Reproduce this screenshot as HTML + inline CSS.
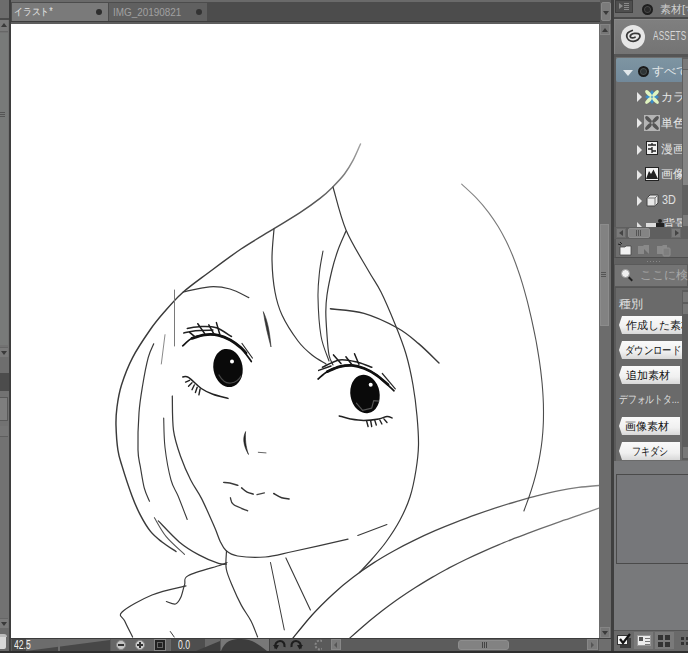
<!DOCTYPE html>
<html><head><meta charset="utf-8">
<style>
*{margin:0;padding:0;box-sizing:border-box}
html,body{width:688px;height:653px;overflow:hidden;background:#6f6f6f;font-family:"Liberation Sans",sans-serif;}
.a{position:absolute}
</style></head><body>
<!-- left panel -->
<div class="a" style="left:0;top:0;width:9px;height:653px;background:#727272"></div>
<div class="a" style="left:9px;top:0;width:2px;height:653px;background:#3e3e3e"></div>
<div class="a" style="left:0;top:0;width:9px;height:18px;background:#6c6c6c"></div>
<div class="a" style="left:0;top:18px;width:9px;height:2px;background:#4a4a4a"></div>
<div class="a" style="left:0;top:20px;width:8px;height:12px;background:#7a7a7a;border-bottom:1px solid #666"></div>
<div class="a" style="left:1px;top:23px;width:0;height:0;border-bottom:4px solid #3a3a3a;border-left:3px solid transparent;border-right:3px solid transparent"></div>
<div class="a" style="left:0;top:33px;width:8px;height:312px;background:#787a79"></div>
<div class="a" style="left:0;top:112px;width:5px;height:1px;background:#555;box-shadow:0 2px 0 #555,0 4px 0 #555"></div>
<div class="a" style="left:0;top:347px;width:8px;height:10px;background:#7a7a7a;border-top:1px solid #666"></div>
<div class="a" style="left:1px;top:351px;width:0;height:0;border-top:4px solid #3a3a3a;border-left:3px solid transparent;border-right:3px solid transparent"></div>
<div class="a" style="left:0;top:357px;width:9px;height:16px;background:#6e6e6e"></div>
<div class="a" style="left:0;top:373px;width:9px;height:18px;background:#4c4c4c"></div>
<div class="a" style="left:0;top:397px;width:8px;height:24px;background:#7e7e7e;border:1px solid #595959;border-left:none"></div>
<div class="a" style="left:0;top:426px;width:8px;height:11px;background:#767676;border-bottom:1px solid #5e5e5e"></div>
<div class="a" style="left:0;top:618px;width:8px;height:10px;background:#7a7a7a;border-top:1px solid #666"></div>
<div class="a" style="left:1px;top:622px;width:0;height:0;border-top:4px solid #3a3a3a;border-left:3px solid transparent;border-right:3px solid transparent"></div>
<div class="a" style="left:0;top:628px;width:9px;height:23px;background:#6a6a6a"></div>
<div class="a" style="left:0;top:636px;width:6px;height:13px;background:#d8d8d8;border-radius:0 0 2px 0"></div>
<div class="a" style="left:0;top:634px;width:7px;height:3px;background:#bbb;border-radius:0 3px 0 0"></div>
<!-- tab bar -->
<div class="a" style="left:11px;top:0;width:589px;height:3px;background:#6a6a6a"></div>
<div class="a" style="left:11px;top:2px;width:589px;height:22px;background:#4c4c4c"></div>
<div class="a" style="left:11px;top:21px;width:589px;height:1px;background:#3c3c3c"></div>
<div class="a" style="left:11px;top:22px;width:589px;height:2px;background:#5e5e5e"></div>
<div class="a" style="left:12px;top:3px;width:96px;height:18px;background:#7a7a7a"></div>
<div class="a" style="left:109px;top:3px;width:98px;height:18px;background:#606060"></div>
<div class="a" style="left:14px;top:5px;font-size:10px;line-height:14px;color:#e4e4e4;white-space:nowrap;transform:scaleX(0.88);transform-origin:0 0">イラスト*</div>
<div class="a" style="left:96px;top:9px;width:6px;height:6px;border-radius:50%;background:#2e2e2e"></div>
<div class="a" style="left:113px;top:5px;font-size:11px;line-height:14px;color:#a0a0a0;white-space:nowrap;transform:scaleX(0.9);transform-origin:0 0">IMG_20190821</div>
<div class="a" style="left:196px;top:9px;width:6px;height:6px;border-radius:50%;background:#333"></div>
<!-- canvas -->
<div class="a" style="left:11px;top:24px;width:588px;height:615px;background:#fff"></div>
<svg class="a" style="left:0;top:0" width="688" height="653" viewBox="0 0 688 653">
<defs><linearGradient id="gc" gradientUnits="userSpaceOnUse" x1="300" y1="0" x2="600" y2="0"><stop offset="0" stop-color="#333"/><stop offset="0.6" stop-color="#4a4a4a"/><stop offset="1" stop-color="#888"/></linearGradient>
<linearGradient id="gr" gradientUnits="userSpaceOnUse" x1="0" y1="185" x2="0" y2="510"><stop offset="0" stop-color="#888"/><stop offset="0.4" stop-color="#555"/><stop offset="1" stop-color="#444"/></linearGradient>
<linearGradient id="gt" gradientUnits="userSpaceOnUse" x1="0" y1="140" x2="0" y2="560"><stop offset="0" stop-color="#aaa"/><stop offset="0.15" stop-color="#555"/><stop offset="0.3" stop-color="#3a3a3a"/><stop offset="1" stop-color="#3a3a3a"/></linearGradient>
<clipPath id="cv"><rect x="11" y="24" width="588" height="615"/></clipPath></defs>
<g clip-path="url(#cv)" fill="none" stroke-linecap="round" stroke-linejoin="round">
<path d="M360.5 144.0C359.2 146.7 355.7 155.4 353.0 160.4C350.3 165.4 347.9 169.5 344.5 174.0C341.1 178.5 336.4 183.3 332.3 187.4C328.2 191.5 325.4 194.2 320.0 198.4C314.6 202.6 307.7 207.6 300.0 212.6C292.3 217.6 283.8 222.6 274.0 228.7C264.2 234.8 252.1 241.5 241.0 249.0C229.9 256.5 217.2 266.2 207.4 273.5C197.6 280.8 189.5 286.5 182.2 293.0C174.9 299.5 169.2 306.4 163.8 312.6C158.4 318.8 155.2 322.5 150.0 330.0C144.8 337.5 137.3 348.4 132.6 357.6C127.8 366.8 124.1 376.8 121.5 385.0C118.9 393.2 117.9 400.2 117.0 407.0C116.1 413.8 115.8 418.4 116.0 425.6C116.2 432.8 116.9 443.3 117.9 450.0C118.9 456.7 119.7 458.3 122.0 465.9C124.3 473.5 128.9 487.6 131.9 495.7C134.9 503.8 136.9 508.4 140.0 514.4C143.1 520.4 146.8 526.8 150.5 531.4C154.2 536.0 157.8 538.6 162.0 542.0C166.2 545.4 173.7 549.9 176.0 551.5" stroke="url(#gt)" stroke-width="1.45"/>
<path d="M274.0 229.0C273.7 234.2 271.8 249.5 272.0 260.0C272.2 270.5 273.3 282.8 275.0 292.0C276.7 301.2 278.2 306.8 282.0 315.0C285.8 323.2 293.0 334.3 298.0 341.0C303.0 347.7 307.3 351.2 312.0 355.0C316.7 358.8 323.7 362.5 326.0 364.0" stroke="#3a3a3a" stroke-width="1.2"/>
<path d="M333.0 187.0C335.2 194.2 340.2 216.2 346.0 230.0C351.8 243.8 362.2 259.7 368.0 270.0C373.8 280.3 376.5 283.0 381.0 292.0C385.5 301.0 390.8 313.7 395.0 324.0C399.2 334.3 403.0 343.8 406.0 354.0C409.0 364.2 411.2 374.7 413.0 385.0C414.8 395.3 416.1 406.0 417.0 416.0C417.9 426.0 418.7 436.0 418.5 445.0C418.3 454.0 417.4 461.3 416.0 470.0C414.6 478.7 412.7 488.7 410.0 497.0C407.3 505.3 404.0 512.5 400.0 520.0C396.0 527.5 390.7 535.5 386.0 542.0C381.3 548.5 376.4 553.9 372.0 559.0C367.6 564.1 361.6 570.2 359.5 572.5" stroke="#3a3a3a" stroke-width="1.2"/>
<path d="M346.0 231.0C344.7 234.2 340.3 243.5 338.0 250.0C335.7 256.5 333.8 262.5 332.0 270.0C330.2 277.5 328.0 288.0 327.0 295.0C326.0 302.0 325.8 305.3 325.8 312.0C325.8 318.7 326.5 327.8 327.0 335.0C327.5 342.2 328.0 350.0 329.0 355.0C330.0 360.0 332.3 363.3 333.0 365.0" stroke="#3a3a3a" stroke-width="1.2"/>
<path d="M323.0 251.0C322.4 254.5 320.3 264.3 319.5 272.0C318.7 279.7 317.8 286.3 318.0 297.0C318.2 307.7 319.2 325.3 321.0 336.0C322.8 346.7 327.7 356.8 329.0 361.0" stroke="#3a3a3a" stroke-width="1.1"/>
<path d="M330.4 308.8C336.0 309.6 352.8 310.2 364.0 313.4C375.2 316.6 388.4 323.0 397.5 328.0C406.6 333.0 411.7 337.8 418.6 343.6C425.5 349.4 435.6 359.7 439.0 362.9" stroke="#3a3a3a" stroke-width="1.4"/>
<path d="M183.3 291.9C187.7 291.0 201.9 287.3 209.7 286.8C217.5 286.3 223.5 287.2 230.0 289.0C236.5 290.8 245.7 296.2 248.8 297.6" stroke="#3a3a3a" stroke-width="1.2"/>
<path d="M174.5 290.0L174.5 346.0" stroke="#7a7a7a" stroke-width="1.0"/>
<path d="M172.3 396.0C172.5 401.7 172.1 420.1 173.5 430.3C174.9 440.5 178.0 449.0 180.9 457.3C183.8 465.6 187.2 473.1 190.7 480.0C194.1 486.9 197.6 490.7 201.6 498.6C205.6 506.5 211.5 520.2 214.6 527.3C217.7 534.4 218.1 537.1 220.0 541.0C221.9 544.9 223.1 548.0 226.0 550.5C228.9 553.0 231.1 554.9 237.6 556.0C244.1 557.1 256.0 557.8 265.2 557.0C274.4 556.2 279.1 554.5 292.9 551.5C306.7 548.5 338.8 541.2 348.0 539.2" stroke="#3a3a3a" stroke-width="1.25"/>
<path d="M153.7 343.8C152.8 346.1 150.0 350.7 148.2 357.6C146.4 364.5 144.2 375.8 142.7 385.0C141.2 394.2 139.8 401.9 139.0 412.7C138.2 423.5 137.8 440.9 138.0 450.0C138.2 459.1 139.3 460.6 140.4 467.0C141.5 473.4 142.8 482.5 144.3 488.2C145.8 493.9 148.6 499.1 149.5 501.2" stroke="#3a3a3a" stroke-width="1.2"/>
<path d="M165.0 334.7L161.3 364.0" stroke="#8a8a8a" stroke-width="1.0"/>
<path d="M163.7 418.0C163.9 422.9 163.8 437.2 165.0 447.5C166.2 457.8 168.8 471.9 171.0 480.0C173.2 488.1 175.4 489.4 178.1 496.0C180.8 502.6 185.7 515.6 187.2 519.5" stroke="#3a3a3a" stroke-width="1.1"/>
<path d="M154.4 517.7C156.4 520.9 161.2 530.5 166.2 536.6C171.2 542.7 181.4 551.3 184.5 554.3" stroke="#555" stroke-width="1.1"/>
<path d="M158.3 520.9C161.8 524.4 172.4 536.2 179.2 541.9C186.0 547.6 192.3 551.3 198.9 554.9C205.5 558.5 213.9 561.9 218.5 563.4C223.1 564.9 225.0 564.0 226.3 564.1" stroke="#3a3a3a" stroke-width="1.3"/>
<path d="M258.3 452.3L266.0 452.9" stroke="#666" stroke-width="1.0"/>
<path d="M223.6 482.4C224.6 482.5 227.4 482.5 229.8 483.0C232.2 483.5 236.6 485.0 237.9 485.4" stroke="#3a3a3a" stroke-width="1.4"/>
<path d="M241.6 487.9C242.5 488.6 245.1 491.2 247.1 492.2C249.1 493.2 252.3 493.8 253.3 494.1" stroke="#333" stroke-width="1.5"/>
<path d="M257.0 494.7L264.4 492.9" stroke="#444" stroke-width="1.3"/>
<path d="M273.7 493.5C275.0 494.2 279.1 496.9 281.7 497.8C284.3 498.7 287.9 498.8 289.1 499.0" stroke="#333" stroke-width="1.5"/>
<path d="M230.4 497.8C230.9 498.9 230.6 502.4 233.5 504.6C236.4 506.8 245.3 509.8 247.7 510.8" stroke="#3a3a3a" stroke-width="1.3"/>
<path d="M357.8 535.5L386.9 524.5" stroke="#3a3a3a" stroke-width="1.1"/>
<path d="M226.5 551.0C226.5 554.0 225.2 563.0 226.3 569.0C227.4 575.0 230.3 580.9 232.8 587.0C235.3 593.1 238.4 599.7 241.4 605.4C244.4 611.1 248.3 615.7 251.0 621.0C253.7 626.3 256.5 634.3 257.6 637.0" stroke="#3a3a3a" stroke-width="1.2"/>
<path d="M227.0 562.5C226.0 562.9 227.4 562.8 221.0 565.0C214.6 567.2 194.6 572.2 188.5 575.5C182.4 578.8 185.9 580.9 184.6 584.6C183.3 588.3 182.2 594.4 180.7 597.6C179.2 600.8 177.9 603.4 175.5 604.0C173.1 604.6 167.9 601.9 166.4 601.5" stroke="#3a3a3a" stroke-width="1.2"/>
<path d="M186.0 585.9C180.3 587.4 162.7 590.6 152.0 595.0C141.3 599.4 126.6 607.7 122.1 612.0C117.5 616.3 123.0 616.8 124.7 621.0C126.5 625.2 131.3 634.3 132.6 637.0" stroke="#3a3a3a" stroke-width="1.2"/>
<path d="M170.3 631.5L174.2 637.0" stroke="#3a3a3a" stroke-width="1.0"/>
<path d="M270.5 562.5L284.3 629.9" stroke="#3a3a3a" stroke-width="1.0"/>
<path d="M285.9 557.9L310.4 610.0" stroke="#3a3a3a" stroke-width="1.1"/>
<path d="M291.6 639.8C295.0 635.7 305.3 622.5 312.1 615.0C318.9 607.4 325.8 600.7 332.6 594.4C339.4 588.1 346.2 582.5 353.1 577.3C359.9 572.0 366.7 567.3 373.6 562.9C380.4 558.4 387.2 554.5 394.1 550.7C400.9 546.9 407.7 543.4 414.6 540.1C421.4 536.8 428.2 533.7 435.1 530.7C441.9 527.8 448.7 525.0 455.5 522.4C462.4 519.7 469.2 517.1 476.0 514.7C482.9 512.2 489.7 509.9 496.5 507.7C503.4 505.4 510.2 503.3 517.0 501.3C523.9 499.3 530.7 497.3 537.5 495.6C544.4 493.9 551.2 492.2 558.0 490.9C564.8 489.5 571.7 488.3 578.5 487.4C585.3 486.5 595.6 485.8 599.0 485.5" stroke="url(#gc)" stroke-width="1.3"/>
<path d="M349.2 638.6C352.0 636.1 360.3 628.6 365.9 623.9C371.4 619.2 377.0 614.8 382.5 610.5C388.1 606.3 393.6 602.2 399.2 598.3C404.7 594.5 410.3 590.8 415.8 587.3C421.4 583.7 426.9 580.4 432.5 577.1C438.0 573.9 443.6 570.9 449.1 567.9C454.7 565.0 460.2 562.2 465.8 559.5C471.3 556.8 476.9 554.2 482.4 551.8C488.0 549.3 493.5 546.9 499.1 544.6C504.6 542.3 510.2 540.1 515.7 537.9C521.3 535.7 526.8 533.7 532.4 531.6C537.9 529.5 543.5 527.5 549.0 525.6C554.6 523.6 560.1 521.6 565.7 519.7C571.2 517.8 576.8 515.9 582.3 513.9C587.9 512.0 596.2 509.1 599.0 508.1" stroke="url(#gc)" stroke-width="1.3"/>
<path d="M461.7 184.2C464.2 186.6 472.2 193.7 476.7 198.4C481.2 203.1 485.1 207.9 488.7 212.6C492.3 217.4 495.4 222.1 498.3 226.8C501.2 231.6 503.7 236.3 506.1 241.0C508.5 245.8 510.5 250.5 512.5 255.2C514.4 260.0 516.2 264.7 517.8 269.5C519.5 274.2 521.0 278.9 522.4 283.7C523.8 288.4 525.1 293.1 526.4 297.9C527.7 302.6 528.8 307.3 529.9 312.1C531.1 316.8 532.1 321.6 533.1 326.3C534.1 331.0 535.1 335.8 536.0 340.5C536.8 345.2 537.7 350.0 538.4 354.7C539.2 359.4 539.9 364.2 540.5 368.9C541.1 373.6 541.6 378.4 542.1 383.1C542.5 387.9 542.9 392.6 543.1 397.3C543.4 402.1 543.5 406.8 543.5 411.5C543.5 416.3 543.5 421.0 543.2 425.7C543.0 430.5 542.6 435.2 542.1 440.0C541.6 444.7 540.9 449.4 540.1 454.2C539.3 458.9 538.4 463.6 537.3 468.4C536.2 473.1 535.0 477.8 533.6 482.6C532.2 487.3 530.7 492.1 529.1 496.8C527.4 501.5 524.7 508.6 523.9 511.0" stroke="url(#gr)" stroke-width="1.1"/>
<path d="M182.7 345.8C184.2 344.6 188.3 340.1 192.0 338.3C195.7 336.5 200.2 335.3 204.7 334.8C209.1 334.3 214.4 334.4 218.7 335.3C223.0 336.2 226.6 337.9 230.3 340.0C234.0 342.1 237.3 344.0 240.8 347.6C244.3 351.2 249.6 359.2 251.3 361.5" stroke="#111" stroke-width="1.7"/>
<path d="M192.0 338.3C194.1 337.7 200.2 335.3 204.7 334.8C209.1 334.3 214.4 334.4 218.7 335.3C223.0 336.2 226.6 337.9 230.3 340.0C234.0 342.1 238.2 345.4 240.8 347.6C243.4 349.8 245.1 352.1 246.0 353.0" stroke="#111" stroke-width="2.8"/>
<path d="M242.0 343.5L252.4 358.0" stroke="#2a2a2a" stroke-width="1.2"/>
<path d="M187.3 328.4C189.6 328.1 196.5 326.7 201.3 326.6C206.2 326.5 211.4 326.2 216.4 327.8C221.4 329.4 229.0 335.1 231.5 336.5" stroke="#222" stroke-width="1.5"/>
<path d="M183.8 333.0C185.7 332.6 190.6 331.2 195.4 330.7C200.2 330.2 210.0 330.2 212.9 330.1" stroke="#222" stroke-width="1.5"/>
<path d="M197.8 323.7L204.7 333.6" stroke="#1a1a1a" stroke-width="1.5"/>
<path d="M208.8 324.9L214.0 334.2" stroke="#1a1a1a" stroke-width="1.5"/>
<path d="M216.4 322.6L219.9 334.8" stroke="#1a1a1a" stroke-width="1.5"/>
<path d="M189.6 332.4L195.4 337.1" stroke="#1a1a1a" stroke-width="1.5"/>
<path d="M182.7 376.9C183.7 377.0 185.4 375.5 188.5 377.4C191.6 379.3 197.2 385.7 201.3 388.5C205.4 391.3 208.5 392.7 212.9 394.3C217.3 395.9 225.5 397.7 228.0 398.4" stroke="#222" stroke-width="1.5"/>
<path d="M189.6 380.3L185.6 382.1" stroke="#222" stroke-width="1.4"/>
<path d="M192.0 382.7L188.5 386.2" stroke="#222" stroke-width="1.4"/>
<path d="M194.3 385.0L192.0 389.7" stroke="#222" stroke-width="1.4"/>
<path d="M197.2 387.3L195.4 392.6" stroke="#222" stroke-width="1.4"/>
<path d="M200.1 389.0L198.9 394.9" stroke="#222" stroke-width="1.4"/>
<path d="M318.1 379.0C319.7 377.8 323.8 373.7 327.4 371.6C331.0 369.6 335.6 367.7 339.7 366.7C343.8 365.7 347.9 365.1 352.0 365.4C356.1 365.7 360.3 366.9 364.4 368.5C368.5 370.1 371.9 371.6 376.8 375.3C381.7 379.0 391.1 388.2 394.0 390.8" stroke="#111" stroke-width="1.7"/>
<path d="M327.4 371.6C329.4 370.8 335.6 367.7 339.7 366.7C343.8 365.7 347.9 365.1 352.0 365.4C356.1 365.7 360.3 366.9 364.4 368.5C368.5 370.1 372.9 372.6 376.8 375.3C380.7 378.0 386.1 383.0 388.0 384.5" stroke="#111" stroke-width="2.8"/>
<path d="M382.3 373.5L395.3 388.9" stroke="#2a2a2a" stroke-width="1.2"/>
<path d="M322.4 367.3C325.3 366.1 333.7 360.7 339.7 359.9C345.7 359.1 352.8 361.2 358.2 362.4C363.6 363.6 369.5 366.5 371.8 367.3" stroke="#222" stroke-width="1.5"/>
<path d="M318.7 370.4L331.0 366.0" stroke="#222" stroke-width="1.5"/>
<path d="M333.5 354.9L341.0 363.6" stroke="#1a1a1a" stroke-width="1.5"/>
<path d="M345.9 356.8L352.0 364.8" stroke="#1a1a1a" stroke-width="1.5"/>
<path d="M354.5 353.7L358.9 364.2" stroke="#1a1a1a" stroke-width="1.5"/>
<path d="M339.2 415.9C341.1 416.4 346.2 418.1 350.3 418.9C354.4 419.6 358.9 420.4 363.6 420.4C368.4 420.4 374.9 419.6 378.8 418.9C382.7 418.2 384.8 416.6 387.0 416.4C389.2 416.2 391.2 417.6 392.0 417.9" stroke="#222" stroke-width="1.5"/>
<path d="M366.6 421.0L368.1 426.5" stroke="#222" stroke-width="1.4"/>
<path d="M370.7 421.0L371.7 426.5" stroke="#222" stroke-width="1.4"/>
<path d="M374.8 420.4L376.3 425.0" stroke="#222" stroke-width="1.4"/>
<path d="M379.8 420.0L381.9 424.0" stroke="#222" stroke-width="1.4"/>
<path d="M383.9 418.9L387.0 422.5" stroke="#222" stroke-width="1.4"/>
<g transform="rotate(-10 228 368)"><ellipse cx="228" cy="368" rx="14.6" ry="19.2" fill="#0a0a0a" stroke="none"/></g>
<path d="M219 375Q224 384 231 383Q238 382 241 376" stroke="#4a4a4a" stroke-width="1.2"/>
<circle cx="232" cy="361.5" r="2" fill="#fff" stroke="none"/>
<g transform="rotate(-10 365 394)"><ellipse cx="365" cy="394" rx="14.6" ry="19.4" fill="#0a0a0a" stroke="none"/></g>
<path d="M356.4 403.1L362.6 410.3L371.7 408.2L373.7 400.6L378.8 401.1" stroke="#555" stroke-width="1.2"/>
<circle cx="370.7" cy="384.7" r="2" fill="#fff" stroke="none"/>
<path d="M263.4 312C266.8 319 269.5 329 271 347C267.8 335 265.3 325 263.4 312Z" fill="#333" stroke="#333" stroke-width="0.6"/>
<path d="M245.5 432C243 437 242.5 444 248.5 454.5C245.5 446 245.2 439 245.5 432Z" fill="#222" stroke="#222" stroke-width="0.6"/>

</g></svg>
<!-- canvas vscroll -->
<div class="a" style="left:599px;top:24px;width:12px;height:615px;background:#6c6c6c"></div>
<div class="a" style="left:600px;top:0;width:11px;height:24px;background:#5a5a5a"></div>
<div class="a" style="left:601px;top:2px;width:10px;height:19px;background:#7b7b7b;border:1px solid #888;border-radius:2px"></div>
<div class="a" style="left:603px;top:11px;width:0;height:0;border-top:4px solid #3a3a3a;border-left:3px solid transparent;border-right:3px solid transparent"></div>
<div class="a" style="left:600px;top:24px;width:10px;height:11px;background:#767676;border:1px solid #858585"></div>
<div class="a" style="left:602px;top:28px;width:0;height:0;border-bottom:4px solid #3a3a3a;border-left:3px solid transparent;border-right:3px solid transparent"></div>
<div class="a" style="left:600px;top:224px;width:9px;height:102px;background:#828282;border:1px solid #8c8c8c"></div>
<div class="a" style="left:601px;top:272px;width:5px;height:1px;background:#555;box-shadow:0 2px 0 #555,0 4px 0 #555"></div>
<div class="a" style="left:600px;top:627px;width:10px;height:11px;background:#767676;border:1px solid #858585"></div>
<div class="a" style="left:602px;top:631px;width:0;height:0;border-top:4px solid #3a3a3a;border-left:3px solid transparent;border-right:3px solid transparent"></div>
<div class="a" style="left:611px;top:0;width:3px;height:653px;background:#3f3f3f"></div>
<!-- right panel -->
<div class="a" style="left:614px;top:0;width:74px;height:653px;background:#6c6c6c"></div>
<!-- header -->
<div class="a" style="left:615px;top:0;width:18px;height:13px;background:#4e4e4e;border:1px solid #3e3e3e"></div>
<div class="a" style="left:619px;top:3px;width:0;height:0;border-left:4px solid #8a8a8a;border-top:3px solid transparent;border-bottom:3px solid transparent"></div>
<div class="a" style="left:624px;top:3px;width:5px;height:1px;background:#8a8a8a;box-shadow:0 2px 0 #8a8a8a,0 4px 0 #8a8a8a,0 6px 0 #8a8a8a"></div>
<div class="a" style="left:642px;top:4px;width:11px;height:11px;border-radius:50%;background:#2a2a2a;border:2px solid #1e1e1e;box-shadow:inset 0 0 0 1px #4a4a4a"></div>
<div class="a" style="left:660px;top:2px;font-size:11px;line-height:14px;color:#cfcfcf;white-space:nowrap">素材[す</div>
<div class="a" style="left:614px;top:17px;width:74px;height:2px;background:#4a4a4a"></div>
<!-- assets row -->
<div class="a" style="left:614px;top:19px;width:74px;height:35px;background:linear-gradient(#7f7f7f,#747474);border-top:1px solid #8a8a8a;border-left:1px solid #858585"></div>
<div class="a" style="left:621px;top:25px;width:24px;height:24px;border-radius:50%;background:#e6e6e6"></div>
<svg class="a" style="left:621px;top:25px" width="24" height="24" viewBox="0 0 24 24"><path d="M11.2 5.5C8 6.5 5.5 8.5 5.7 11C5.9 14 8.5 16.3 12.2 16.3C15.5 16.3 19 14 19 11C19 8.5 16.3 8.2 13.5 8.4C11 8.6 9 9.8 9.2 11.6C9.5 13.2 12.5 13 14 12.2" fill="none" stroke="#383838" stroke-width="1.8" stroke-linecap="round"/></svg>
<div class="a" style="left:653px;top:30px;font-size:12px;line-height:13px;color:#d6d6d6;white-space:nowrap;transform:scaleX(0.68);transform-origin:0 0;letter-spacing:0.3px">ASSETS</div>
<div class="a" style="left:614px;top:54px;width:74px;height:3px;background:#555"></div>
<!-- tree -->
<div class="a" style="left:614px;top:57px;width:74px;height:171px;background:#6f6f6f;border-left:2px solid #5a5a5a"></div>
<div class="a" style="left:616px;top:58px;width:67px;height:24px;background:linear-gradient(#7e95a2,#72899a);border-radius:2px"></div>
<div class="a" style="left:623px;top:70px;width:0;height:0;border-top:6px solid #e0e6ea;border-left:5px solid transparent;border-right:5px solid transparent"></div>
<div class="a" style="left:638px;top:66px;width:11px;height:11px;border-radius:50%;background:#2e3436;border:2px solid #1a1a1a;box-shadow:inset 0 0 0 1px #4a5050"></div>
<div class="a" style="left:652px;top:64px;font-size:12px;line-height:15px;color:#e4e8ea;white-space:nowrap">すべて</div>
<!-- tree rows -->
<div class="a" style="left:637px;top:92px;width:0;height:0;border-left:5px solid #e8e8e8;border-top:5px solid transparent;border-bottom:5px solid transparent"></div>
<svg class="a" style="left:644px;top:89px" width="16" height="16" viewBox="0 0 16 16"><path d="M8 1L11 5L15 8L11 11L8 15L5 11L1 8L5 5Z" fill="#3a8cc8"/><g fill="#e0f4c0"><ellipse cx="4.5" cy="4.5" rx="4.2" ry="1.9" transform="rotate(45 4.5 4.5)"/><ellipse cx="11.5" cy="4.5" rx="4.2" ry="1.9" transform="rotate(-45 11.5 4.5)"/><ellipse cx="4.5" cy="11.5" rx="4.2" ry="1.9" transform="rotate(-45 4.5 11.5)"/><ellipse cx="11.5" cy="11.5" rx="4.2" ry="1.9" transform="rotate(45 11.5 11.5)"/></g></svg>
<div class="a" style="left:661px;top:90px;font-size:12px;line-height:15px;color:#e8e8e8;white-space:nowrap">カラ</div>
<div class="a" style="left:637px;top:118px;width:0;height:0;border-left:5px solid #e8e8e8;border-top:5px solid transparent;border-bottom:5px solid transparent"></div>
<svg class="a" style="left:644px;top:115px" width="16" height="16" viewBox="0 0 16 16"><rect width="16" height="16" fill="#b4b4b4"/><g fill="#555"><ellipse cx="4.5" cy="4.5" rx="4.2" ry="1.9" transform="rotate(45 4.5 4.5)"/><ellipse cx="11.5" cy="4.5" rx="4.2" ry="1.9" transform="rotate(-45 11.5 4.5)"/><ellipse cx="4.5" cy="11.5" rx="4.2" ry="1.9" transform="rotate(-45 4.5 11.5)"/><ellipse cx="11.5" cy="11.5" rx="4.2" ry="1.9" transform="rotate(45 11.5 11.5)"/></g></svg>
<div class="a" style="left:661px;top:116px;font-size:12px;line-height:15px;color:#e8e8e8;white-space:nowrap">単色</div>
<div class="a" style="left:637px;top:145px;width:0;height:0;border-left:5px solid #e8e8e8;border-top:5px solid transparent;border-bottom:5px solid transparent"></div>
<svg class="a" style="left:646px;top:141px" width="12" height="14" viewBox="0 0 12 14"><rect x="0.5" y="0.5" width="11" height="13" fill="#f0f0f0" stroke="#222"/><path d="M2 4H10M6 2V4M2 8H6V6M6 8V12M6 10H10" stroke="#222" stroke-width="1.3" fill="none"/></svg>
<div class="a" style="left:661px;top:142px;font-size:12px;line-height:15px;color:#e8e8e8;white-space:nowrap">漫画</div>
<div class="a" style="left:637px;top:170px;width:0;height:0;border-left:5px solid #e8e8e8;border-top:5px solid transparent;border-bottom:5px solid transparent"></div>
<svg class="a" style="left:645px;top:167px" width="14" height="14" viewBox="0 0 14 14"><rect x="0.5" y="0.5" width="13" height="13" fill="#f4f4f4" stroke="#222"/><path d="M1 12L4 4L6 7L8.5 2.5L13 12Z" fill="#222"/></svg>
<div class="a" style="left:661px;top:167px;font-size:12px;line-height:15px;color:#e8e8e8;white-space:nowrap">画像</div>
<div class="a" style="left:637px;top:196px;width:0;height:0;border-left:5px solid #e8e8e8;border-top:5px solid transparent;border-bottom:5px solid transparent"></div>
<svg class="a" style="left:646px;top:194px" width="13" height="13" viewBox="0 0 13 13"><path d="M1 4L4 1H12V9L9 12H1Z" fill="#e8e8e8" stroke="#444"/><path d="M1 4H9V12M9 4L12 1" fill="none" stroke="#777"/></svg>
<div class="a" style="left:662px;top:193px;font-size:12px;line-height:15px;color:#e0e0e0;white-space:nowrap;transform:scaleX(0.9);transform-origin:0 0">3D</div>
<div class="a" style="left:636px;top:216px;width:46px;height:11px;overflow:hidden">
<div style="position:absolute;left:1px;top:6px;width:0;height:0;border-left:5px solid #e0e0e0;border-top:5px solid transparent;border-bottom:5px solid transparent"></div>
<div style="position:absolute;left:10px;top:7px;width:11px;height:5px;background:#ddd"></div>
<div style="position:absolute;left:22px;top:3px;width:4px;height:4px;border-radius:50%;background:#222"></div>
<div style="position:absolute;left:20px;top:7px;width:8px;height:5px;background:#222"></div>
<div style="position:absolute;left:27px;top:1px;font-size:12px;line-height:15px;color:#e0e0e0;white-space:nowrap">背景</div>
</div>
<!-- tree vscroll -->
<div class="a" style="left:682px;top:57px;width:6px;height:171px;background:#606060"></div>
<div class="a" style="left:683px;top:59px;width:5px;height:10px;background:#7a7a7a"></div>
<div class="a" style="left:683px;top:70px;width:5px;height:115px;background:#858585"></div>
<div class="a" style="left:683px;top:215px;width:5px;height:11px;background:#7a7a7a"></div>
<!-- hscroll -->
<div class="a" style="left:614px;top:227px;width:74px;height:12px;background:#5f5f5f"></div>
<div class="a" style="left:616px;top:228px;width:10px;height:10px;background:#7a7a7a;border:1px solid #6a6a6a"></div>
<div class="a" style="left:619px;top:230px;width:0;height:0;border-right:4px solid #444;border-top:3px solid transparent;border-bottom:3px solid transparent"></div>
<div class="a" style="left:628px;top:228px;width:22px;height:10px;background:#848484;border-radius:2px;border:1px solid #8e8e8e"></div>
<div class="a" style="left:636px;top:230px;width:1px;height:6px;background:#555;box-shadow:2px 0 0 #555,4px 0 0 #555"></div>
<div class="a" style="left:671px;top:228px;width:10px;height:10px;background:#7a7a7a;border:1px solid #6a6a6a"></div>
<div class="a" style="left:675px;top:230px;width:0;height:0;border-left:4px solid #444;border-top:3px solid transparent;border-bottom:3px solid transparent"></div>
<!-- folder row -->
<div class="a" style="left:614px;top:239px;width:74px;height:19px;background:#6e6e6e;border-left:2px solid #5a5a5a;border-bottom:1px solid #4e4e4e"></div>
<svg class="a" style="left:617px;top:241px" width="60" height="16" viewBox="0 0 60 16">
<path d="M3 6H8L9 5H14V14H3Z" fill="#f0f0f0" stroke="#444" stroke-width="0.8"/><path d="M3 1L5 3M1 3L4 4" stroke="#222" stroke-width="1"/>
<path d="M21 5H26L27 4H32V13H21Z" fill="#8a8a8a"/><path d="M27 8L32 13H27Z" fill="#6a6a6a"/>
<path d="M40 5H45L46 4H50V13H40Z" fill="#8a8a8a"/><rect x="46" y="7" width="7" height="8" rx="1" fill="#7e7e7e" stroke="#8f8f8f"/>
</svg>
<div class="a" style="left:614px;top:258px;width:74px;height:6px;background:#626262"></div>
<div class="a" style="left:647px;top:261px;width:1px;height:1px;background:#888;box-shadow:3px 0 0 #888,6px 0 0 #888,9px 0 0 #888,12px 0 0 #888"></div>
<!-- search -->
<div class="a" style="left:614px;top:264px;width:74px;height:23px;background:#747474;border:1px solid #5a5a5a"></div>
<div class="a" style="left:621px;top:269px;width:9px;height:9px;border-radius:50%;background:#f0f0f0;border:1px solid #999"></div>
<div class="a" style="left:628px;top:278px;width:5px;height:2px;background:#222;transform:rotate(45deg)"></div>
<div class="a" style="left:640px;top:268px;font-size:12px;line-height:15px;color:#a8a8a8;white-space:nowrap">ここに検...</div>
<!-- kinds panel -->
<div class="a" style="left:614px;top:287px;width:74px;height:174px;background:#6a6a6a;border-top:1px solid #555;border-left:2px solid #5a5a5a"></div>
<div class="a" style="left:682px;top:290px;width:6px;height:170px;background:#5c5c5c"></div>
<div class="a" style="left:683px;top:292px;width:5px;height:10px;background:#777"></div>
<div class="a" style="left:683px;top:304px;width:5px;height:10px;background:#777"></div>
<div class="a" style="left:683px;top:447px;width:5px;height:11px;background:#777"></div>
<div class="a" style="left:619px;top:297px;font-size:12px;line-height:15px;color:#e0e0e0;white-space:nowrap">種別</div>
<div class="a" style="left:619px;top:392px;font-size:11px;line-height:15px;color:#e0e0e0;white-space:nowrap;transform:scaleX(0.8);transform-origin:0 0">デフォルトタ...</div>
<div class="a" style="left:619px;top:316px;width:63px;height:18px;overflow:hidden"><svg style="position:absolute;left:0;top:0" width="63" height="18"><defs><linearGradient id="bg316" x1="0" y1="0" x2="0" y2="1"><stop offset="0" stop-color="#fafafa"/><stop offset="0.6" stop-color="#f0f0f0"/><stop offset="1" stop-color="#d8d8d8"/></linearGradient></defs><path d="M3 0H63V18H3L0 9Z" fill="url(#bg316)"/></svg><div style="position:absolute;left:7px;top:1px;font-size:11px;line-height:16px;color:#111;white-space:nowrap;transform:scaleX(1.0);transform-origin:0 0">作成した素材</div></div>
<div class="a" style="left:619px;top:341px;width:63px;height:18px;overflow:hidden"><svg style="position:absolute;left:0;top:0" width="63" height="18"><defs><linearGradient id="bg341" x1="0" y1="0" x2="0" y2="1"><stop offset="0" stop-color="#fafafa"/><stop offset="0.6" stop-color="#f0f0f0"/><stop offset="1" stop-color="#d8d8d8"/></linearGradient></defs><path d="M3 0H63V18H3L0 9Z" fill="url(#bg341)"/></svg><div style="position:absolute;left:6px;top:1px;font-size:11px;line-height:16px;color:#111;white-space:nowrap;transform:scaleX(0.85);transform-origin:0 0">ダウンロード</div></div>
<div class="a" style="left:619px;top:366px;width:61px;height:18px;overflow:hidden"><svg style="position:absolute;left:0;top:0" width="61" height="18"><defs><linearGradient id="bg366" x1="0" y1="0" x2="0" y2="1"><stop offset="0" stop-color="#fafafa"/><stop offset="0.6" stop-color="#f0f0f0"/><stop offset="1" stop-color="#d8d8d8"/></linearGradient></defs><path d="M3 0H61V18H3L0 9Z" fill="url(#bg366)"/></svg><div style="position:absolute;left:7px;top:1px;font-size:11px;line-height:16px;color:#111;white-space:nowrap;transform:scaleX(1.0);transform-origin:0 0">追加素材</div></div>
<div class="a" style="left:619px;top:417px;width:61px;height:18px;overflow:hidden"><svg style="position:absolute;left:0;top:0" width="61" height="18"><defs><linearGradient id="bg417" x1="0" y1="0" x2="0" y2="1"><stop offset="0" stop-color="#fafafa"/><stop offset="0.6" stop-color="#f0f0f0"/><stop offset="1" stop-color="#d8d8d8"/></linearGradient></defs><path d="M3 0H61V18H3L0 9Z" fill="url(#bg417)"/></svg><div style="position:absolute;left:6px;top:1px;font-size:11px;line-height:16px;color:#111;white-space:nowrap;transform:scaleX(1.0);transform-origin:0 0">画像素材</div></div>
<div class="a" style="left:619px;top:442px;width:61px;height:18px;overflow:hidden"><svg style="position:absolute;left:0;top:0" width="61" height="18"><defs><linearGradient id="bg442" x1="0" y1="0" x2="0" y2="1"><stop offset="0" stop-color="#fafafa"/><stop offset="0.6" stop-color="#f0f0f0"/><stop offset="1" stop-color="#d8d8d8"/></linearGradient></defs><path d="M3 0H61V18H3L0 9Z" fill="url(#bg442)"/></svg><div style="position:absolute;left:13px;top:1px;font-size:11px;line-height:16px;color:#111;white-space:nowrap;transform:scaleX(0.82);transform-origin:0 0">フキダシ</div></div>
<!-- lower box -->
<div class="a" style="left:614px;top:461px;width:74px;height:170px;background:#78797b"></div>
<div class="a" style="left:616px;top:474px;width:72px;height:90px;background:#76777a;border:1px solid #4a4a4a;border-right:none"></div>
<!-- toolbar -->
<div class="a" style="left:614px;top:630px;width:74px;height:21px;background:#6a6a6a;border-top:1px solid #555"></div>
<div class="a" style="left:634px;top:632px;width:19px;height:17px;background:#7a7a7a"></div>
<div class="a" style="left:655px;top:632px;width:19px;height:17px;background:#7a7a7a"></div>
<div class="a" style="left:620px;top:638px;width:11px;height:10px;background:#3a3a3a"></div>
<div class="a" style="left:617px;top:635px;width:11px;height:10px;background:#f4f4f4;border:1px solid #333"></div>
<svg class="a" style="left:617px;top:632px" width="15" height="14" viewBox="0 0 15 14"><path d="M3 7L6 11L13 2" fill="none" stroke="#111" stroke-width="2.2"/></svg>
<div class="a" style="left:637px;top:635px;width:14px;height:11px;background:#ececec;border:1px solid #999"></div>
<div class="a" style="left:639px;top:637px;width:4px;height:4px;background:#555"></div>
<div class="a" style="left:645px;top:638px;width:5px;height:1px;background:#777;box-shadow:0 3px 0 #777,0 6px 0 #777"></div>
<div class="a" style="left:658px;top:635px;width:5px;height:5px;background:#333;box-shadow:7px 0 0 #333,0 7px 0 #333,7px 7px 0 #333"></div>
<div class="a" style="left:681px;top:637px;width:3px;height:3px;background:#333;box-shadow:5px 0 0 #333,0 5px 0 #333,5px 5px 0 #333"></div>
<!-- status bar -->
<div class="a" style="left:11px;top:638px;width:600px;height:13px;background:#5a5a5a;border-top:1px solid #3c3c3c"></div>
<div class="a" style="left:12px;top:639px;width:98px;height:12px;background:#6a6a6a"></div>
<svg class="a" style="left:12px;top:639px" width="98" height="12"><path d="M0 0H12L98 0V12H0Z" fill="#474747"/><path d="M0 0H98L10 12H0Z" fill="#6a6a6a" opacity="0"/><path d="M14 0H98L98 1L14 12Z" fill="#6c6c6c"/><path d="M0 0H14V12H0Z" fill="#474747"/></svg>
<div class="a" style="left:58px;top:639px;width:2px;height:12px;background:#6e6e6e"></div>
<div class="a" style="left:14px;top:638px;font-size:12px;line-height:14px;color:#f0f0f0;white-space:nowrap;transform:scaleX(0.72);transform-origin:0 0">42.5</div>
<div class="a" style="left:111px;top:639px;width:59px;height:12px;background:#666"></div>
<div class="a" style="left:116px;top:640px;width:10px;height:10px;border-radius:50%;background:#c4c4c4;border:1px solid #8a8a8a"></div>
<div class="a" style="left:118px;top:644px;width:6px;height:2px;background:#333"></div>

<div class="a" style="left:135px;top:640px;width:10px;height:10px;border-radius:50%;background:#d0d0d0;border:1px solid #8a8a8a"></div>
<div class="a" style="left:137px;top:644px;width:6px;height:2px;background:#333"></div>
<div class="a" style="left:139px;top:642px;width:2px;height:6px;background:#333"></div>
<div class="a" style="left:154px;top:639px;width:12px;height:12px;background:#222;border:1px solid #888"></div>
<div class="a" style="left:157px;top:642px;width:6px;height:6px;border:1px solid #666"></div>
<div class="a" style="left:170px;top:639px;width:50px;height:12px;background:#6a6a6a"></div>
<div class="a" style="left:171px;top:639px;width:34px;height:12px;background:#4e4e4e"></div>
<svg class="a" style="left:196px;top:639px" width="24" height="12"><path d="M0 12L24 2V12Z" fill="#3e3e3e"/></svg>
<div class="a" style="left:178px;top:638px;font-size:12px;line-height:14px;color:#f0f0f0;white-space:nowrap;transform:scaleX(0.72);transform-origin:0 0">0.0</div>
<div class="a" style="left:221px;top:639px;width:48px;height:12px;background:#787878"></div>
<svg class="a" style="left:221px;top:639px" width="48" height="12"><path d="M0 12C4 2 10 0 20 0C30 0 36 4 46 12Z" fill="#3c3c3c"/></svg>
<div class="a" style="left:269px;top:639px;width:1px;height:12px;background:#444"></div>
<svg class="a" style="left:272px;top:639px" width="50" height="12"><path d="M3.5 9.5C2 5 5 2 8 2C11 2 13 4.5 12.5 8" fill="none" stroke="#1e1e1e" stroke-width="2.2"/><path d="M1 6L4.5 10.5L7 6Z" fill="#1e1e1e"/><path d="M28.5 9.5C30 5 27 2 24 2C21 2 19 4.5 19.5 8" fill="none" stroke="#1e1e1e" stroke-width="2.2"/><path d="M31 6L27.5 10.5L25 6Z" fill="#1e1e1e"/><circle cx="48" cy="6" r="4.5" fill="none" stroke="#888" stroke-width="2" stroke-dasharray="2 1.5"/></svg>
<div class="a" style="left:331px;top:639px;width:10px;height:11px;background:#7a7a7a;border:1px solid #888"></div>
<div class="a" style="left:334px;top:642px;width:0;height:0;border-right:3px solid #555;border-top:3px solid transparent;border-bottom:3px solid transparent"></div>
<div class="a" style="left:341px;top:639px;width:246px;height:12px;background:#5c5c5c"></div>
<div class="a" style="left:458px;top:640px;width:51px;height:10px;background:#828282;border-radius:3px;border:1px solid #8e8e8e"></div>
<div class="a" style="left:482px;top:642px;width:1px;height:6px;background:#444;box-shadow:2px 0 0 #444,4px 0 0 #444"></div>
<div class="a" style="left:587px;top:639px;width:11px;height:11px;background:#7a7a7a;border:1px solid #888"></div>
<div class="a" style="left:591px;top:642px;width:0;height:0;border-left:3px solid #555;border-top:3px solid transparent;border-bottom:3px solid transparent"></div>
<div class="a" style="left:599px;top:639px;width:12px;height:12px;background:#6e6e6e"></div>
<div class="a" style="left:0;top:651px;width:688px;height:2px;background:#2e2e2e"></div>
</body></html>
